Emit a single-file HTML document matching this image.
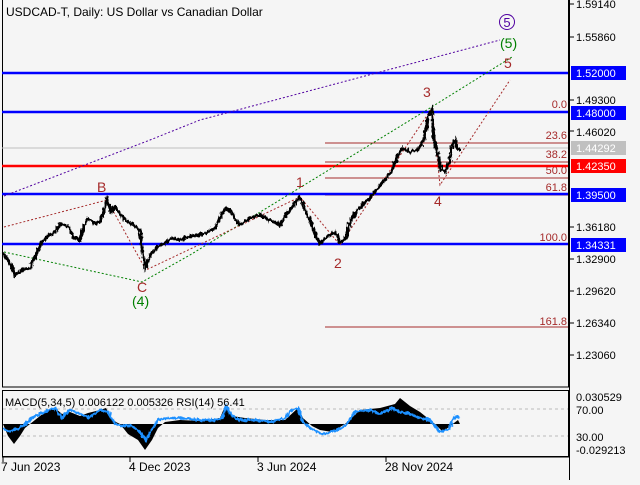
<!DOCTYPE html><html><head><style>
body{margin:0;background:#f5f5f5;width:640px;height:480px;overflow:hidden;font-family:"Liberation Sans",sans-serif}
</style></head><body>
<svg width="640" height="480" viewBox="0 0 640 480" xmlns="http://www.w3.org/2000/svg" font-family="Liberation Sans, sans-serif">
<defs>
<filter id="j" x="-5%" y="-20%" width="110%" height="140%">
<feTurbulence type="fractalNoise" baseFrequency="0.5 0.2" numOctaves="2" seed="3"/>
<feDisplacementMap in="SourceGraphic" scale="5" xChannelSelector="R" yChannelSelector="G"/>
</filter>
<filter id="k" x="-5%" y="-20%" width="110%" height="140%">
<feTurbulence type="fractalNoise" baseFrequency="0.4 0.2" numOctaves="2" seed="5"/>
<feDisplacementMap in="SourceGraphic" scale="4" xChannelSelector="R" yChannelSelector="G"/>
</filter>
</defs>
<rect width="640" height="480" fill="#f5f5f5"/>
<rect x="2.5" y="-1" width="566" height="388" fill="none" stroke="#000"/>
<rect x="2.5" y="390.5" width="566" height="66" fill="none" stroke="#000"/>
<text x="6" y="16" font-size="12">USDCAD-T, Daily:  US Dollar vs Canadian Dollar</text>
<g stroke="#a52a2a" stroke-width="1">
<line x1="325" y1="112" x2="568" y2="112"/><line x1="325" y1="143" x2="568" y2="143"/>
<line x1="325" y1="162" x2="568" y2="162"/><line x1="325" y1="178" x2="568" y2="178"/>
<line x1="325" y1="195" x2="568" y2="195"/><line x1="325" y1="244" x2="568" y2="244"/>
<line x1="325" y1="327" x2="568" y2="327"/></g>
<g fill="#a52a2a" font-size="11" text-anchor="end">
<text x="567" y="108">0.0</text><text x="567" y="139">23.6</text><text x="567" y="158">38.2</text>
<text x="567" y="174">50.0</text><text x="567" y="191">61.8</text><text x="567" y="241">100.0</text><text x="567" y="325">161.8</text></g>
<line x1="2" y1="148" x2="568" y2="148" stroke="#c0c0c0"/>
<g stroke="#0000ff" stroke-width="2.5">
<line x1="2" y1="73" x2="568" y2="73"/><line x1="2" y1="112" x2="568" y2="112"/>
<line x1="2" y1="194" x2="568" y2="194"/><line x1="2" y1="244" x2="568" y2="244"/></g>
<line x1="2" y1="166" x2="568" y2="166" stroke="#ff0000" stroke-width="2.5"/>
<polyline points="4,196 150,140 200,120 500,40" fill="none" stroke="#5000a0" stroke-dasharray="2,2"/>
<polyline points="4,252 142,282 190,255 430,108 512,57" fill="none" stroke="#008000" stroke-dasharray="2,2"/>
<polyline points="4,227 107,200 146,270 300,197 340,245 432,108 440,185 510,80" fill="none" stroke="#a52a2a" stroke-dasharray="2,2"/>
<polyline filter="url(#j)" points="3,253 10,263 15,275 22,270 30,268 36,255 40,245 48,236 55,232 60,224 68,226 74,238 80,240 84,226 88,218 94,224 100,222 104,210 107,200 111,212 115,207 120,214 125,220 132,224 140,230 143,255 145,268 148,262 150,255 158,247 165,243 172,238 180,240 190,236 200,235 208,232 215,228 220,218 225,208 230,210 236,220 240,225 250,218 260,215 270,220 280,225 288,212 295,203 300,197 305,210 310,220 316,236 320,243 328,236 335,232 340,242 345,240 350,222 356,212 362,205 370,198 378,188 385,180 392,170 398,155 403,148 410,152 418,150 424,140 428,118 432,110 434,140 438,155 441,170 445,172 450,160 452,145 455,140 458,150 460,150" fill="none" stroke="#000" stroke-width="3"/>
<g font-size="14" fill="#a52a2a"><text x="97" y="192">B</text><text x="296" y="187">1</text><text x="334" y="268">2</text><text x="423" y="97">3</text><text x="434" y="206">4</text><text x="504" y="68">5</text><text x="137" y="292">C</text></g>
<text x="132" y="306" font-size="14" fill="#008000">(4)</text>
<text x="500" y="48" font-size="14" fill="#008000">(5)</text>
<circle cx="507" cy="22" r="7.5" fill="none" stroke="#5000a0"/>
<text x="507" y="27" font-size="13" fill="#5000a0" text-anchor="middle">5</text>
<line x1="569.5" y1="0" x2="569.5" y2="480" stroke="#000"/>
<g font-size="11" fill="#000">
<text x="576" y="8">1.59140</text><text x="576" y="41">1.55860</text><text x="576" y="104">1.49300</text>
<text x="576" y="136">1.46020</text><text x="576" y="231">1.36180</text><text x="576" y="263">1.32900</text>
<text x="576" y="295">1.29620</text><text x="576" y="327">1.26340</text><text x="576" y="359">1.23060</text></g>
<g stroke="#000"><line x1="569" y1="4" x2="574" y2="4"/><line x1="569" y1="37" x2="574" y2="37"/><line x1="569" y1="100" x2="574" y2="100"/><line x1="569" y1="131" x2="574" y2="131"/><line x1="569" y1="227" x2="574" y2="227"/><line x1="569" y1="259" x2="574" y2="259"/><line x1="569" y1="291" x2="574" y2="291"/><line x1="569" y1="323" x2="574" y2="323"/><line x1="569" y1="355" x2="574" y2="355"/></g>
<rect x="571" y="66" width="55" height="14" fill="#0000ff"/><text x="576" y="77" font-size="11" fill="#fff">1.52000</text>
<rect x="571" y="106" width="55" height="14" fill="#0000ff"/><text x="576" y="117" font-size="11" fill="#fff">1.48000</text>
<rect x="571" y="141" width="55" height="14" fill="#c0c0c0"/><text x="576" y="152" font-size="11" fill="#fff">1.44292</text>
<rect x="571" y="159" width="55" height="14" fill="#ff0000"/><text x="576" y="170" font-size="11" fill="#fff">1.42350</text>
<rect x="571" y="188" width="55" height="14" fill="#0000ff"/><text x="576" y="199" font-size="11" fill="#fff">1.39500</text>
<rect x="571" y="238" width="55" height="14" fill="#0000ff"/><text x="576" y="249" font-size="11" fill="#fff">1.34331</text>
<line x1="3" y1="409" x2="568" y2="409" stroke="#bbb" stroke-dasharray="3,3"/>
<line x1="3" y1="436" x2="568" y2="436" stroke="#bbb" stroke-dasharray="3,3"/>
<polygon points="3,424 8,436 14,444 20,436 25,428 35,420 45,412 55,408 62,414 70,412 80,416 88,413 100,410 106,408 112,420 120,424 128,434 138,440 145,450 152,440 158,428 165,422 180,420 200,421 220,418 225,406 232,416 245,418 265,420 285,420 298,408 303,418 312,426 320,430 332,432 345,424 360,410 380,408 395,404 400,398 410,406 420,412 435,424 443,432 450,426 458,420 460,424" fill="#000"/>
<polyline filter="url(#k)" points="3,428 8,432 14,430 20,428 26,424 32,418 40,414 48,410 55,408 62,418 70,410 78,413 88,418 100,410 108,412 115,424 122,426 128,425 135,428 140,432 146,440 150,432 158,420 165,418 180,418 200,420 215,420 222,418 226,406 232,416 240,420 255,420 270,422 285,418 292,410 298,408 302,420 310,428 322,434 332,432 345,426 355,412 370,410 380,414 392,408 400,412 410,414 420,418 430,420 440,432 448,430 455,416 460,418" fill="none" stroke="#1e90ff" stroke-width="2.5"/>
<text x="5" y="406" font-size="11">MACD(5,34,5) 0.006122 0.005326 RSI(14) 56.41</text>
<g font-size="11"><text x="576" y="401">0.030529</text><text x="576" y="414">70.00</text><text x="576" y="441">30.00</text><text x="576" y="454">-0.029213</text></g>
<line x1="2" y1="457" x2="569" y2="457" stroke="#000"/>
<g stroke="#000"><line x1="3" y1="457" x2="3" y2="462"/><line x1="130" y1="457" x2="130" y2="462"/><line x1="258" y1="457" x2="258" y2="462"/><line x1="386" y1="457" x2="386" y2="462"/></g>
<g font-size="12"><text x="1" y="471">7 Jun 2023</text><text x="129" y="471">4 Dec 2023</text><text x="257" y="471">3 Jun 2024</text><text x="385" y="471">28 Nov 2024</text></g>
</svg>
</body></html>
